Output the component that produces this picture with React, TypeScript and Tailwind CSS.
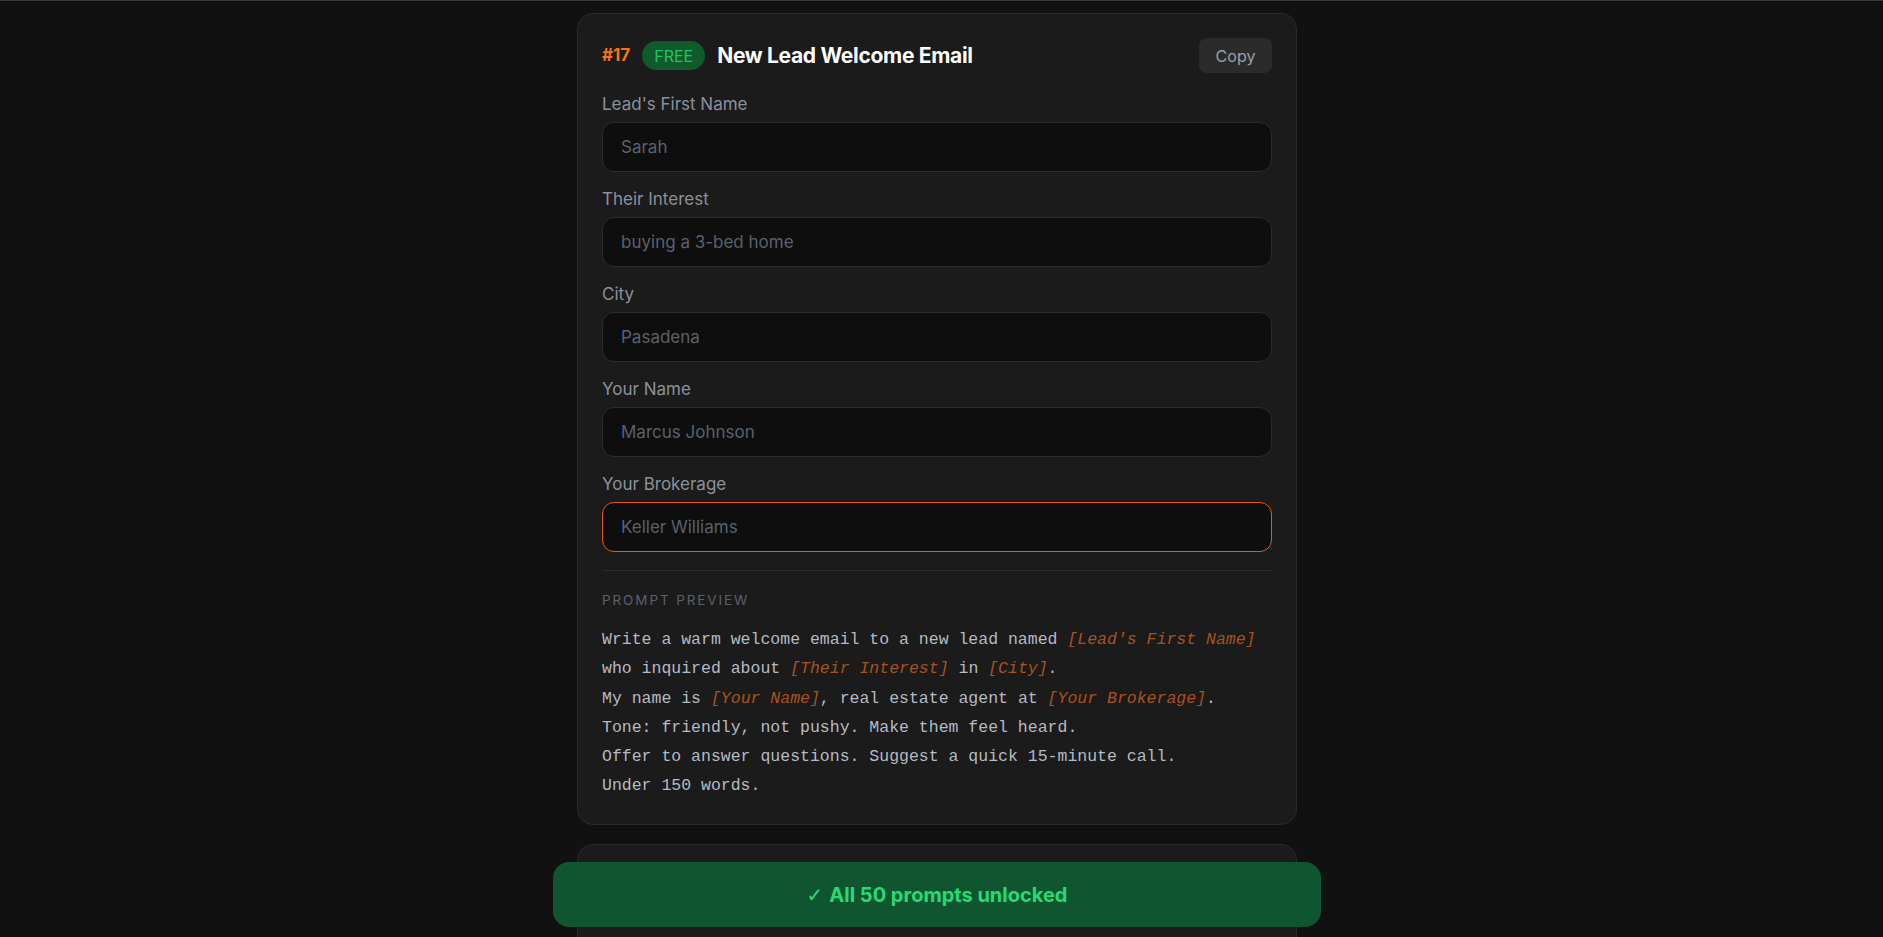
import React from 'react';

type Field = { label: string; placeholder: string; focused?: boolean };

const FIELDS: Field[] = [
  { label: "Lead's First Name", placeholder: 'Sarah' },
  { label: 'Their Interest', placeholder: 'buying a 3-bed home' },
  { label: 'City', placeholder: 'Pasadena' },
  { label: 'Your Name', placeholder: 'Marcus Johnson' },
  { label: 'Your Brokerage', placeholder: 'Keller Williams', focused: true },
];

// Placeholder token inside the preview
const Var: React.FC<{ children: React.ReactNode }> = ({ children }) => (
  <span className="italic text-[#a8531f]">{children}</span>
);

const PromptCard: React.FC = () => (
  <div className="w-full rounded-2xl border border-[#2a2a2a] bg-[#1b1b1b] px-6 pt-6 pb-[23px]">
    {/* Header */}
    <div className="flex h-[35px] items-center justify-between">
      <div className="flex items-center gap-3">
        <span className="text-[17px] font-bold text-[#f97316]">#17</span>
        <span className="flex h-[29px] items-center rounded-full bg-[#115a2c] px-[12px] text-[16px] text-[#22c55e]">
          FREE
        </span>
        <h2 className="text-[21px] font-bold tracking-[-0.015em] text-white">New Lead Welcome Email</h2>
      </div>
      <button className="h-[35px] w-[73px] rounded-lg bg-[#2b2b2b] text-[16px] text-[#9aa0aa]">Copy</button>
    </div>

    {/* Fields */}
    <div className="mt-[21px] flex flex-col gap-[17px]">
      {FIELDS.map((f) => (
        <div key={f.label} className="flex flex-col gap-2">
          <label className="text-[17px] leading-5 text-[#8b919b]">{f.label}</label>
          <input
            type="text"
            readOnly
            placeholder={f.placeholder}
            className={`h-[50px] w-full rounded-xl border bg-[#0e0e0e] px-[18px] text-[17px] text-white placeholder-[#5a616d] outline-none ${
              f.focused ? 'border-[#ea580c]' : 'border-[#2c2c2c]'
            }`}
          />
        </div>
      ))}
    </div>

    {/* Preview */}
    <div className="mt-[18px] border-t border-[#2c2c2c] pt-[21px]">
      <div className="text-[13.5px] uppercase leading-4 tracking-[0.14em] text-[#5a616d]">Prompt Preview</div>
      <div className="mt-[17px] font-['Liberation_Mono',monospace] text-[16.5px] leading-[29.3px] text-[#b6bac3]">
        <div>
          Write a warm welcome email to a new lead named <Var>[Lead's First Name]</Var>
        </div>
        <div>
          who inquired about <Var>[Their Interest]</Var> in <Var>[City]</Var>.
        </div>
        <div>
          My name is <Var>[Your Name]</Var>, real estate agent at <Var>[Your Brokerage]</Var>.
        </div>
        <div>Tone: friendly, not pushy. Make them feel heard.</div>
        <div>Offer to answer questions. Suggest a quick 15-minute call.</div>
        <div>Under 150 words.</div>
      </div>
    </div>
  </div>
);

export default function App() {
  return (
    <div className="relative h-screen overflow-hidden border-t border-[#3a3a3a] bg-[#111111] pr-[9px] font-['Inter',sans-serif]">
      <div className="mx-auto flex w-[720px] flex-col gap-[19px] pt-3">
        <PromptCard />
        <div className="h-[200px] w-full rounded-2xl border border-[#2a2a2a] bg-[#1b1b1b]" />
      </div>

      {/* Unlocked banner, pinned over the list */}
      <div className="fixed bottom-[10px] left-[calc(50%-4.5px)] flex h-[65px] w-[768px] -translate-x-1/2 items-center justify-center rounded-2xl bg-[#0f5630]">
        <span className="flex items-center gap-[6px] text-[20px] font-bold text-[#24dc72]">
          <span className="font-['DejaVu_Sans',sans-serif] font-normal">✓</span>
          All 50 prompts unlocked
        </span>
      </div>
    </div>
  );
}
